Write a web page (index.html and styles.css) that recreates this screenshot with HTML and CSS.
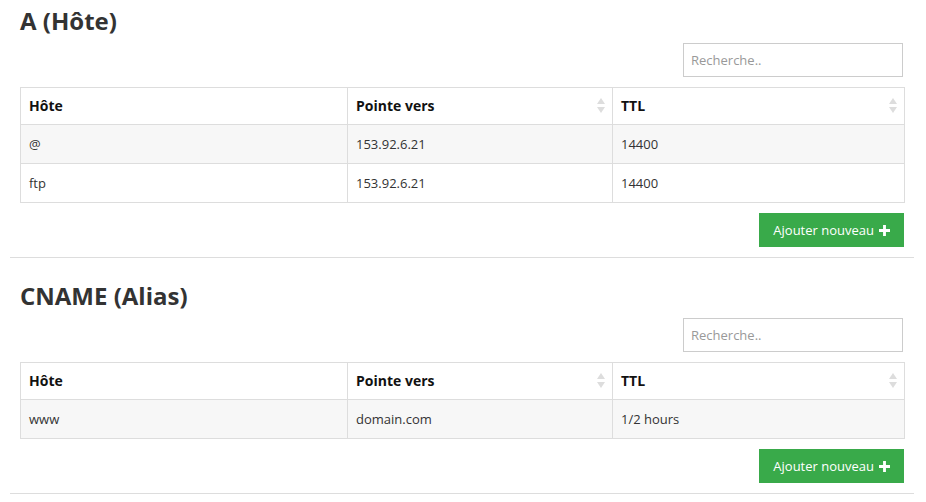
FILE: index.html
```html
<!DOCTYPE html>
<html lang="fr">
<head>
<meta charset="utf-8">
<title>DNS</title>
<link rel="stylesheet" href="styles.css">
</head>
<body>
<section class="zone">
  <h2 class="zone-title">A (Hôte)</h2>
  <div class="search-row"><input class="search" type="text" placeholder="Recherche.."></div>
  <table class="records">
    <colgroup><col class="c-host"><col class="c-points"><col class="c-ttl"></colgroup>
    <thead>
      <tr><th>Hôte</th><th class="sortable">Pointe vers<span class="sort"></span></th><th class="sortable">TTL<span class="sort"></span></th></tr>
    </thead>
    <tbody>
      <tr><td>@</td><td>153.92.6.21</td><td>14400</td></tr>
      <tr><td>ftp</td><td>153.92.6.21</td><td>14400</td></tr>
    </tbody>
  </table>
  <div class="actions"><button class="btn-add">Ajouter nouveau <svg class="plus" viewBox="0 0 10 10" width="11" height="11"><path d="M3.7 0h2.6v3.7H10v2.6H6.3V10H3.7V6.3H0V3.7h3.7z" fill="#fff"/></svg></button></div>
</section>
<section class="zone">
  <h2 class="zone-title">CNAME (Alias)</h2>
  <div class="search-row"><input class="search" type="text" placeholder="Recherche.."></div>
  <table class="records">
    <colgroup><col class="c-host"><col class="c-points"><col class="c-ttl"></colgroup>
    <thead>
      <tr><th>Hôte</th><th class="sortable">Pointe vers<span class="sort"></span></th><th class="sortable">TTL<span class="sort"></span></th></tr>
    </thead>
    <tbody>
      <tr><td>www</td><td>domain.com</td><td>1/2 hours</td></tr>
    </tbody>
  </table>
  <div class="actions"><button class="btn-add">Ajouter nouveau <svg class="plus" viewBox="0 0 10 10" width="11" height="11"><path d="M3.7 0h2.6v3.7H10v2.6H6.3V10H3.7V6.3H0V3.7h3.7z" fill="#fff"/></svg></button></div>
</section>
</body>
</html>
```
FILE: styles.css
```css
* { box-sizing: border-box; }
body {
  margin: 0;
  background: #fff;
  font-family: "Open Sans", "Liberation Sans", sans-serif;
  font-size: 13px;
  color: #333;
}
.zone {
  margin: 0 12px 17px 10px;
  padding: 7px 10px 10px;
  border-bottom: 1px solid #ddd;
}
.zone-title {
  margin: 0;
  font-size: 24px;
  line-height: 28px;
  font-weight: 700;
  color: #333;
}
.search-row {
  display: flex;
  justify-content: flex-end;
  margin-top: 8px;
  margin-bottom: 10px;
}
.search {
  width: 220px;
  height: 34px;
  margin-right: 1px;
  border: 1px solid #ccc;
  padding: 0 7px;
  font-family: inherit;
  font-size: 13px;
  color: #555;
  outline: none;
}
.search::placeholder { color: #999; }
.records {
  width: 100%;
  table-layout: fixed;
  border-collapse: collapse;
  border: 1px solid #ddd;
}
.c-host { width: 327px; }
.c-points { width: 265px; }
.c-ttl { width: 292px; }
.records th, .records td {
  border: 1px solid #ddd;
  padding: 0 8px;
  text-align: left;
  vertical-align: middle;
  line-height: 18px;
}
.records th {
  height: 37px;
  font-size: 14px;
  font-weight: 700;
  color: #111;
  position: relative;
}
.records td { height: 39px; }
.records tbody tr:nth-child(odd) td { background: #f7f7f7; }
.sort {
  position: absolute;
  right: 7px;
  top: 50%;
  width: 8px;
  height: 15px;
  margin-top: -8px;
}
.sort::before, .sort::after {
  content: "";
  position: absolute;
  left: 0;
  border-left: 4px solid transparent;
  border-right: 4px solid transparent;
}
.sort::before { top: 0; border-bottom: 6px solid #ddd; }
.sort::after { bottom: 0; border-top: 6px solid #ddd; }
.actions {
  display: flex;
  justify-content: flex-end;
  margin-top: 10px;
}
.btn-add {
  height: 34px;
  padding: 0 14px;
  border: 0;
  background: #39aa4a;
  color: #fff;
  font-family: inherit;
  font-size: 13px;
  display: inline-flex;
  align-items: center;
  gap: 5px;
}
.plus { display: block; }
```
